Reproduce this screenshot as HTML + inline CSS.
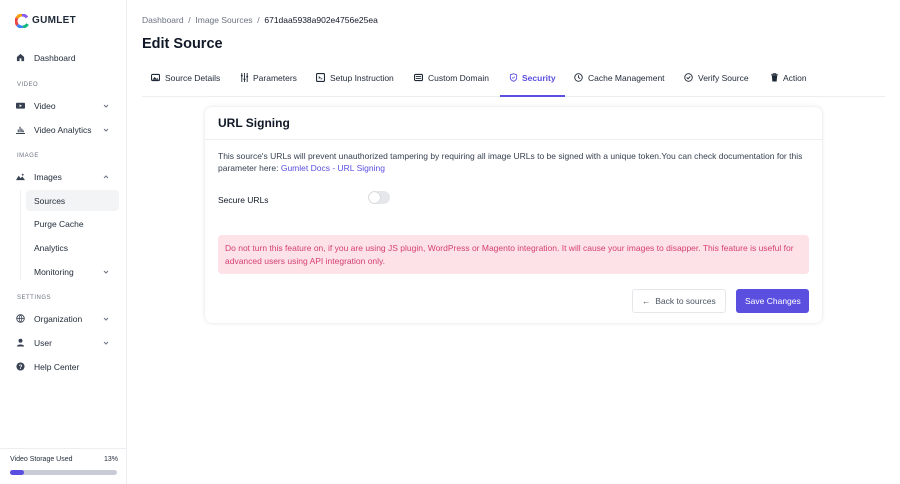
<!DOCTYPE html>
<html><head><style>
*{box-sizing:border-box;margin:0;padding:0}
body{width:900px;height:484px;font-family:"Liberation Sans",sans-serif;background:#fff;position:relative;overflow:hidden;color:#1f2937}
.sb{position:absolute;left:0;top:0;width:127px;height:484px;border-right:1px solid #eceef2;background:#fff}
.a{position:absolute;font-size:8.5px;color:#1f2937;white-space:nowrap}
.lbl{position:absolute;font-size:6px;color:#6b7280;letter-spacing:.5px}
.ic{position:absolute;left:16px;width:9px;height:9px}
.chev{position:absolute;left:103px;width:6px;height:6px}
.m{position:absolute;font-size:8.5px;white-space:nowrap}
.ti{position:absolute;top:73px;width:9px;height:9px}
</style></head><body>
<div class="sb">
 <svg style="position:absolute;left:15px;top:14px" width="14" height="14" viewBox="0 0 14 14">
  <path d="M7 1A6 6 0 0 0 2 4" stroke="#f59e0b" stroke-width="3" fill="none"/>
  <path d="M2 4A6 6 0 0 0 2.5 11" stroke="#ef4444" stroke-width="3" fill="none"/>
  <path d="M2.5 11A6 6 0 0 0 8 13" stroke="#3b82f6" stroke-width="3" fill="none"/>
  <path d="M8 13A6 6 0 0 0 12.5 10" stroke="#10b981" stroke-width="3" fill="none"/>
  <path d="M7 1A6 6 0 0 1 12 3.5" stroke="#8b5cf6" stroke-width="3" fill="none"/>
 </svg>
 <div class="a" style="left:32px;top:15px;font-weight:bold;font-size:10px;letter-spacing:.3px">GUMLET</div>
 <svg class="ic" style="top:53px" viewBox="0 0 10 10"><path d="M5 1L1 4.5V9h3V6h2v3h3V4.5z" fill="#374151"/></svg>
 <div class="a" style="left:34px;top:53px">Dashboard</div>
 <div class="lbl" style="left:17px;top:82px">VIDEO</div>
 <svg class="ic" style="top:101px" viewBox="0 0 10 10"><rect x="0" y="2" width="10" height="6.5" rx="1" fill="#374151"/><path d="M4 3.8v3l2.5-1.5z" fill="#fff"/></svg>
 <div class="a" style="left:34px;top:101px">Video</div><svg class="chev" style="top:103px" viewBox="0 0 6 6"><path d="M1 2l2 2 2-2" stroke="#6b7280" fill="none"/></svg>
 <svg class="ic" style="top:125px" viewBox="0 0 10 10"><path d="M0 9.5h10M2.5 5v3M4.5 2v6M6.5 4v4M8 6v2" stroke="#374151" stroke-width="1.2"/></svg>
 <div class="a" style="left:34px;top:125px">Video Analytics</div><svg class="chev" style="top:127px" viewBox="0 0 6 6"><path d="M1 2l2 2 2-2" stroke="#6b7280" fill="none"/></svg>
 <div class="lbl" style="left:17px;top:153px">IMAGE</div>
 <svg class="ic" style="top:172px" viewBox="0 0 10 10"><path d="M0 9l3-5 2 3 2-2 3 4z" fill="#374151"/><circle cx="7.5" cy="3" r="1" fill="#374151"/></svg>
 <div class="a" style="left:34px;top:172px">Images</div><svg class="chev" style="top:174px" viewBox="0 0 6 6"><path d="M1 4l2-2 2 2" stroke="#6b7280" fill="none"/></svg>
 <div style="position:absolute;left:20px;top:190px;width:1px;height:90px;background:#eceef2"></div>
 <div style="position:absolute;left:26px;top:190px;width:93px;height:21px;background:#f3f4f6;border-radius:4px"></div>
 <div class="a" style="left:34px;top:196px">Sources</div>
 <div class="a" style="left:34px;top:219px">Purge Cache</div>
 <div class="a" style="left:34px;top:243px">Analytics</div>
 <div class="a" style="left:34px;top:267px">Monitoring</div><svg class="chev" style="top:269px" viewBox="0 0 6 6"><path d="M1 2l2 2 2-2" stroke="#6b7280" fill="none"/></svg>
 <div class="lbl" style="left:17px;top:295px">SETTINGS</div>
 <svg class="ic" style="top:314px" viewBox="0 0 10 10"><circle cx="5" cy="5" r="4.2" fill="none" stroke="#374151"/><path d="M1 5h8M5 1c-2 2-2 6 0 8M5 1c2 2 2 6 0 8" fill="none" stroke="#374151" stroke-width=".8"/></svg>
 <div class="a" style="left:34px;top:314px">Organization</div><svg class="chev" style="top:316px" viewBox="0 0 6 6"><path d="M1 2l2 2 2-2" stroke="#6b7280" fill="none"/></svg>
 <svg class="ic" style="top:338px" viewBox="0 0 10 10"><circle cx="5" cy="3" r="2.2" fill="#374151"/><path d="M1 9.5c0-3 8-3 8 0z" fill="#374151"/></svg>
 <div class="a" style="left:34px;top:338px">User</div><svg class="chev" style="top:340px" viewBox="0 0 6 6"><path d="M1 2l2 2 2-2" stroke="#6b7280" fill="none"/></svg>
 <svg class="ic" style="top:362px" viewBox="0 0 10 10"><circle cx="5" cy="5" r="4.5" fill="#374151"/><text x="5" y="7.5" font-size="7" fill="#fff" text-anchor="middle" font-weight="bold">?</text></svg>
 <div class="a" style="left:34px;top:362px">Help Center</div>
 <div style="position:absolute;left:0;top:448px;width:127px;height:1px;background:#eceef2"></div>
 <div class="a" style="left:10px;top:456px;font-size:7px">Video Storage Used</div>
 <div class="a" style="left:104px;top:456px;font-size:7px">13%</div>
 <div style="position:absolute;left:10px;top:470px;width:107px;height:5px;border-radius:3px;background:#c9ccd6"><div style="width:14px;height:5px;border-radius:3px;background:#5b4fe0"></div></div>
</div>

<div class="m" style="left:142px;top:15px;color:#6b7280">Dashboard &nbsp;/&nbsp; Image Sources &nbsp;/&nbsp; <span style="color:#111827">671daa5938a902e4756e25ea</span></div>
<div class="m" style="left:142px;top:36px;font-size:14.5px;font-weight:bold;color:#111827">Edit Source</div>

<div style="position:absolute;left:142px;top:96px;width:743px;height:1px;background:#eceef2"></div>
<div style="position:absolute;left:500px;top:95px;width:65px;height:2px;background:#5b4fe0"></div>
<svg class="ti" style="left:151px" viewBox="0 0 10 10"><rect x=".6" y="1.6" width="8.8" height="6.8" rx="1" fill="none" stroke="#1f2937" stroke-width="1.2"/><path d="M1.5 7.5l2.5-3 2 2 1-1 1.5 2z" fill="#1f2937"/></svg>
<div class="m" style="left:165px;top:73px">Source Details</div>
<svg class="ti" style="left:240px" viewBox="0 0 10 10"><path d="M2 0v10M5 0v10M8 0v10" stroke="#1f2937" stroke-width="1"/><path d="M1 3h2M4 7h2M7 4h2" stroke="#1f2937" stroke-width="1.5"/></svg>
<div class="m" style="left:253px;top:73px">Parameters</div>
<svg class="ti" style="left:316px" viewBox="0 0 10 10"><rect x=".6" y=".6" width="8.8" height="8.8" rx="1" fill="none" stroke="#1f2937" stroke-width="1.2"/><path d="M3 4l1.5 1L3 6M5 6.5h2" stroke="#1f2937" fill="none"/></svg>
<div class="m" style="left:330px;top:73px">Setup Instruction</div>
<svg class="ti" style="left:414px" viewBox="0 0 10 10"><rect x=".6" y="1.6" width="8.8" height="6.8" rx="1" fill="none" stroke="#1f2937" stroke-width="1.2"/><path d="M2 4h6M2 6h6" stroke="#1f2937"/></svg>
<div class="m" style="left:428px;top:73px">Custom Domain</div>
<svg class="ti" style="left:509px" viewBox="0 0 10 10"><path d="M5 .8L1.5 2v3c0 2.2 1.5 3.5 3.5 4.2 2-.7 3.5-2 3.5-4.2V2z" fill="none" stroke="#5b4fe0"/><path d="M3.5 5l1 1 2-2" fill="none" stroke="#5b4fe0" stroke-width=".8"/></svg>
<div class="m" style="left:522px;top:73px;color:#5b4fe0;font-weight:bold">Security</div>
<svg class="ti" style="left:574px" viewBox="0 0 10 10"><circle cx="5" cy="5" r="4.2" fill="none" stroke="#1f2937"/><path d="M5 2.5V5l1.8 1.2" fill="none" stroke="#1f2937"/></svg>
<div class="m" style="left:588px;top:73px">Cache Management</div>
<svg class="ti" style="left:684px" viewBox="0 0 10 10"><circle cx="5" cy="5" r="4.2" fill="none" stroke="#1f2937"/><path d="M3 5l1.5 1.5L7 3.8" fill="none" stroke="#1f2937"/></svg>
<div class="m" style="left:698px;top:73px">Verify Source</div>
<svg class="ti" style="left:770px" viewBox="0 0 10 10"><path d="M1 2h8M3.5 2V.8h3V2" stroke="#1f2937" fill="none"/><path d="M2 2.5h6l-.6 7H2.6z" fill="#1f2937"/></svg>
<div class="m" style="left:783px;top:73px">Action</div>

<div style="position:absolute;left:205px;top:107px;width:617px;height:216px;background:#fff;border-radius:7px;box-shadow:0 0 4px rgba(0,0,0,.12)">
 <div class="m" style="left:13px;top:9px;font-size:12px;font-weight:bold;color:#111827">URL Signing</div>
 <div style="position:absolute;left:0;top:32px;width:617px;height:1px;background:#eceef2"></div>
 <div class="m" style="left:13px;top:43px;line-height:12px;white-space:normal;width:595px;color:#374151">This source's URLs will prevent unauthorized tampering by requiring all image URLs to be signed with a unique token.You can check documentation for this parameter here: <span style="color:#5b4fe0">Gumlet Docs - URL Signing</span></div>
 <div class="m" style="left:13px;top:88px;color:#111827">Secure URLs</div>
 <div style="position:absolute;left:163px;top:84px;width:22px;height:13px;border-radius:7px;background:#e5e7eb"><div style="position:absolute;left:1px;top:1px;width:11px;height:11px;border-radius:50%;background:#fff;box-shadow:0 0 1px #999"></div></div>
 <div style="position:absolute;left:13px;top:128px;width:591px;height:39px;background:#fde2e8;border-radius:4px"></div>
 <div class="m" style="left:20px;top:135px;line-height:12.5px;white-space:normal;width:580px;color:#d64072">Do not turn this feature on, if you are using JS plugin, WordPress or Magento integration. It will cause your images to disapper. This feature is useful for advanced users using API integration only.</div>
 <div style="position:absolute;left:427px;top:182px;width:94px;height:24px;border:1px solid #e5e7eb;border-radius:3px"></div>
 <div class="m" style="left:437px;top:189px;color:#4b5563">←&nbsp; Back to sources</div>
 <div style="position:absolute;left:531px;top:182px;width:73px;height:24px;background:#5b4fe0;border-radius:3px"></div>
 <div class="m" style="left:540px;top:189px;color:#fff">Save Changes</div>
</div>
</body></html>
